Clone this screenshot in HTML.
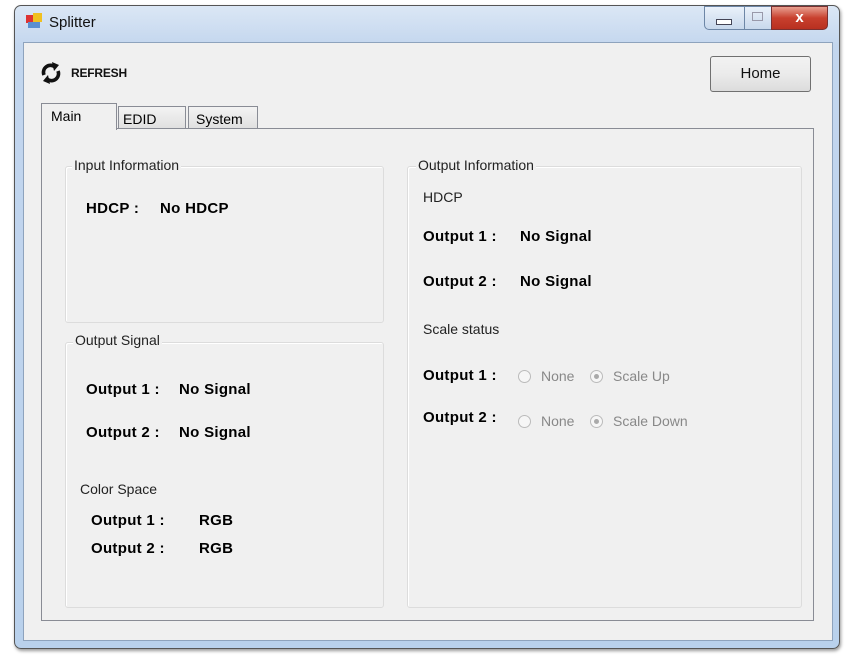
<!DOCTYPE html>
<html><head><style>
body{margin:0;width:852px;height:669px;background:#fff;position:relative;overflow:hidden;font-family:"Liberation Sans",sans-serif;font-size:14px;color:#000}
.a{position:absolute}
.win{left:14px;top:5px;width:824px;height:642px;border:1px solid #555;border-radius:7px;background:linear-gradient(#dbe7f5,#c3d6ee 40px,#b9d1ec);box-shadow:1px 2px 3px rgba(0,0,0,.4)}
.client{left:23px;top:42px;width:808px;height:597px;background:#f0f0f0;border:1px solid #8ea3bd}
.gb{border:1px solid #dcdcdc;border-radius:3px;box-shadow:inset 1px 1px 0 #fff}
.lg{background:#f0f0f0;padding:0 2px;font-size:14px;color:#222}
b{font-weight:bold;font-size:15px;letter-spacing:0.3px}
.r{width:11px;height:11px;border:1px solid #bbb;border-radius:50%;background:#f6f6f6}
.g{color:#888}
</style></head><body>
<div class="a win"></div>
<div class="a" style="left:26px;top:15px;width:8px;height:8px;background:#d33"></div>
<div class="a" style="left:33px;top:13px;width:9px;height:9px;background:#f0c020"></div>
<div class="a" style="left:28px;top:22px;width:12px;height:6px;background:#5a8fd0"></div>
<div class="a" style="left:49px;top:14px;font-size:15px;color:#111">Splitter</div>
<div class="a" style="left:704px;top:6px;width:40px;height:22px;border:1px solid #6d86a6;border-radius:0 0 0 5px;background:linear-gradient(#eaf1fa,#c8d8ec)"></div>
<div class="a" style="left:716px;top:19px;width:14px;height:4px;border:1px solid #445;background:#fff"></div>
<div class="a" style="left:744px;top:6px;width:27px;height:22px;border:1px solid #6d86a6;background:linear-gradient(#eaf1fa,#c8d8ec)"></div>
<div class="a" style="left:752px;top:12px;width:9px;height:7px;border:1px solid #99a"></div>
<div class="a" style="left:771px;top:6px;width:55px;height:22px;border:1px solid #7a3030;border-radius:0 0 5px 0;background:linear-gradient(#e8a090,#c8402e 50%,#b83020);color:#fff;font-weight:bold;text-align:center;line-height:22px;font-size:15px">x</div>
<div class="a client"></div>
<svg class="a" style="left:40px;top:62px" width="22" height="22" viewBox="0 0 22 22"><path d="M4 13A7 7 0 0 1 15 5" fill="none" stroke="#111" stroke-width="3.6"/><path d="M12 0l7 3-5 6z" fill="#111"/><path d="M18 9A7 7 0 0 1 7 17" fill="none" stroke="#111" stroke-width="3.6"/><path d="M10 22l-7-3 5-6z" fill="#111"/></svg>
<div class="a" style="left:71px;top:66px;font-size:12px;font-weight:bold;color:#111;letter-spacing:-0.2px">REFRESH</div>
<div class="a" style="left:710px;top:56px;width:99px;height:34px;border:1px solid #707070;border-radius:3px;background:linear-gradient(#f2f2f2,#ebebeb 50%,#dcdcdc);text-align:center;line-height:34px;font-size:15px;color:#111">Home</div>
<div class="a" style="left:41px;top:128px;width:771px;height:491px;border:1px solid #898c95;background:#f0f0f0"></div>
<div class="a" style="left:118px;top:106px;width:68px;height:22px;border:1px solid #898c95;border-bottom:none;background:linear-gradient(#f3f3f3,#e0e0e0);font-size:14px;line-height:24px;padding-left:4px;box-sizing:border-box">EDID</div>
<div class="a" style="left:188px;top:106px;width:70px;height:22px;border:1px solid #898c95;border-bottom:none;background:linear-gradient(#f3f3f3,#e0e0e0);font-size:14px;line-height:24px;padding-left:7px;box-sizing:border-box">System</div>
<div class="a" style="left:41px;top:103px;width:76px;height:27px;border:1px solid #898c95;border-bottom:none;background:#f0f0f0;font-size:14px;line-height:24px;padding-left:9px;box-sizing:border-box">Main</div>
<div class="a gb" style="left:65px;top:166px;width:317px;height:155px"></div>
<div class="a lg" style="left:72px;top:157px">Input Information</div>
<div class="a" style="left:86px;top:200px"><b>HDCP :</b></div>
<div class="a" style="left:160px;top:200px"><b>No HDCP</b></div>
<div class="a gb" style="left:65px;top:342px;width:317px;height:264px"></div>
<div class="a lg" style="left:73px;top:332px">Output Signal</div>
<div class="a" style="left:86px;top:381px"><b>Output 1 :</b></div>
<div class="a" style="left:179px;top:381px"><b>No Signal</b></div>
<div class="a" style="left:86px;top:424px"><b>Output 2 :</b></div>
<div class="a" style="left:179px;top:424px"><b>No Signal</b></div>
<div class="a" style="left:80px;top:481px;color:#222">Color Space</div>
<div class="a" style="left:91px;top:512px"><b>Output 1 :</b></div>
<div class="a" style="left:199px;top:512px"><b>RGB</b></div>
<div class="a" style="left:91px;top:540px"><b>Output 2 :</b></div>
<div class="a" style="left:199px;top:540px"><b>RGB</b></div>
<div class="a gb" style="left:407px;top:166px;width:393px;height:440px"></div>
<div class="a lg" style="left:416px;top:157px">Output Information</div>
<div class="a" style="left:423px;top:189px;color:#222">HDCP</div>
<div class="a" style="left:423px;top:228px"><b>Output 1 :</b></div>
<div class="a" style="left:520px;top:228px"><b>No Signal</b></div>
<div class="a" style="left:423px;top:273px"><b>Output 2 :</b></div>
<div class="a" style="left:520px;top:273px"><b>No Signal</b></div>
<div class="a" style="left:423px;top:321px;color:#222">Scale status</div>
<div class="a" style="left:423px;top:367px"><b>Output 1 :</b></div>
<div class="a r" style="left:518px;top:370px"></div>
<div class="a g" style="left:541px;top:368px">None</div>
<div class="a r" style="left:590px;top:370px"><div style="margin:3px;width:5px;height:5px;border-radius:50%;background:#aaa"></div></div>
<div class="a g" style="left:613px;top:368px">Scale Up</div>
<div class="a" style="left:423px;top:409px"><b>Output 2 :</b></div>
<div class="a r" style="left:518px;top:415px"></div>
<div class="a g" style="left:541px;top:413px">None</div>
<div class="a r" style="left:590px;top:415px"><div style="margin:3px;width:5px;height:5px;border-radius:50%;background:#aaa"></div></div>
<div class="a g" style="left:613px;top:413px">Scale Down</div>
</body></html>
